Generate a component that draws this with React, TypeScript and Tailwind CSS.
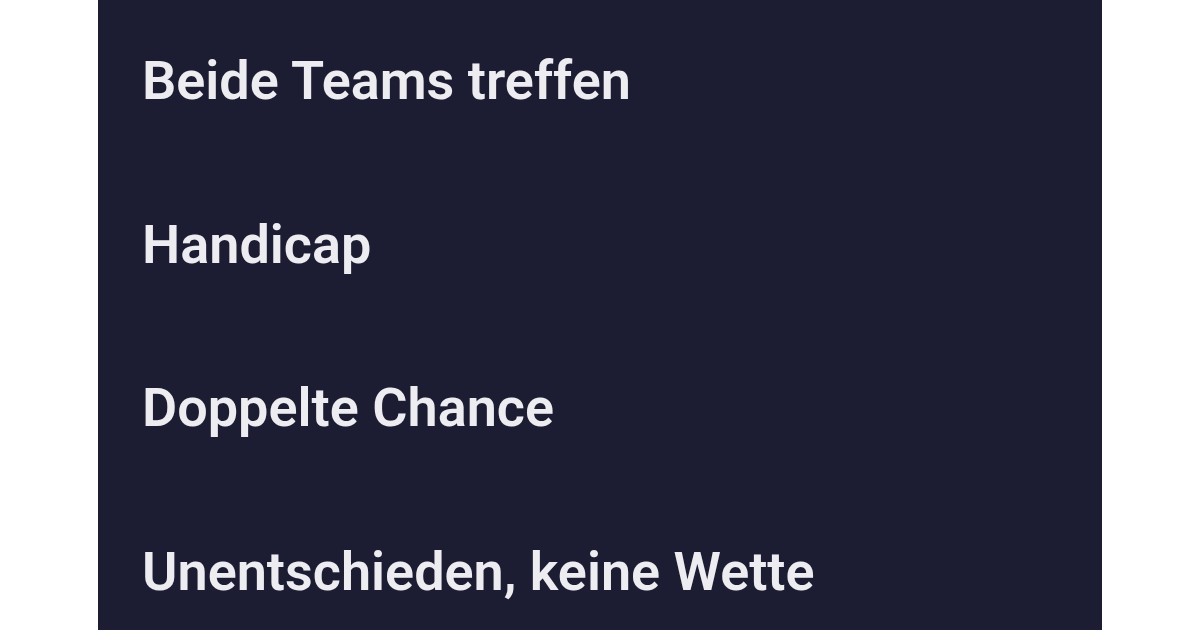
const markets = [
  "Beide Teams treffen",
  "Handicap",
  "Doppelte Chance",
  "Unentschieden, keine Wette",
];

export default function App() {
  return (
    <div className="flex h-[630px] w-[1200px] justify-center overflow-hidden bg-white">
      <ul className="flex w-[1004px] flex-col bg-[#1c1c33] pl-[44px] -mt-[1px]">
        {markets.map((name) => (
          <li
            key={name}
            className="flex h-[163.5px] shrink-0 items-center font-['Roboto',sans-serif] text-[54px] font-semibold text-[#ececf1]"
          >
            {name}
          </li>
        ))}
      </ul>
    </div>
  );
}
